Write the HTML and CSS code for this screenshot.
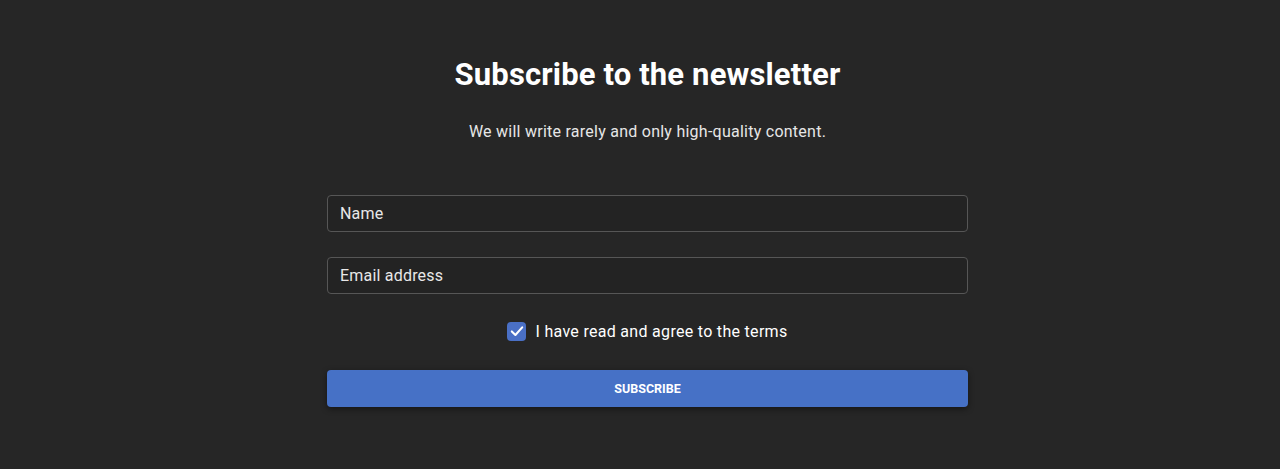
FILE: index.html
```html
<!DOCTYPE html>
<html lang="en">
<head>
<meta charset="utf-8">
<title>Subscribe</title>
<link rel="stylesheet" href="styles.css">
</head>
<body>
<main class="page">
  <section class="subscribe">
    <h1 class="title">Subscribe to the newsletter</h1>
    <p class="lead">We will write rarely and only high-quality content.</p>
    <form class="form">
      <input class="field" type="text" placeholder="Name">
      <input class="field" type="email" placeholder="Email address">
      <label class="agree">
        <span class="check">
          <svg viewBox="0 0 20 20" width="16" height="16"><path d="M3.5 10.5l4.5 4.5 8.5-9.5" fill="none" stroke="#fff" stroke-width="2.6" stroke-linecap="round" stroke-linejoin="round"/></svg>
        </span>
        <span>I have read and agree to the terms</span>
      </label>
      <button class="btn" type="button">Subscribe</button>
    </form>
  </section>
</main>
</body>
</html>
```
FILE: styles.css
```css
html, body {
  margin: 0;
  padding: 0;
  background: #262626;
  height: 100%;
}
body {
  font-family: Roboto, "Liberation Sans", sans-serif;
  color: #fff;
}
.page {
  padding: 55px 0 0 15px;
  display: flex;
  justify-content: center;
}
.subscribe {
  width: 641px;
  display: flex;
  flex-direction: column;
  align-items: center;
}
.title {
  margin: 0;
  font-size: 31px;
  font-weight: 700;
  letter-spacing: 0.15px;
  line-height: 40px;
  color: #fff;
}
.lead {
  margin: 26px 0 0;
  font-size: 16px;
  letter-spacing: 0.25px;
  line-height: 22px;
  color: #e6e6e6;
}
.form {
  width: 100%;
  margin-top: 52px;
  display: flex;
  flex-direction: column;
}
.field {
  box-sizing: border-box;
  width: 100%;
  height: 37px;
  margin: 0 0 25px;
  padding: 0 12px;
  background: #232323;
  border: 1px solid #565656;
  border-radius: 4px;
  font-family: inherit;
  font-size: 16px;
  letter-spacing: 0.2px;
  color: #fff;
  outline: none;
}
.field::placeholder {
  color: #e8e8e8;
  opacity: 1;
}
.field:last-of-type {
  margin-bottom: 0;
}
.agree {
  display: flex;
  align-items: center;
  justify-content: center;
  gap: 9px;
  height: 22px;
  margin-top: 26px;
  font-size: 16px;
  letter-spacing: 0.3px;
  color: #fff;
}
.check {
  width: 19px;
  height: 19px;
  border-radius: 4px;
  background: #4a70c6;
  display: flex;
  align-items: center;
  justify-content: center;
}
.btn {
  margin-top: 28px;
  height: 37px;
  border: none;
  border-radius: 4px;
  background: #4671c6;
  color: #fff;
  font-family: inherit;
  font-size: 12.5px;
  font-weight: 700;
  text-transform: uppercase;
  box-shadow: 0 2px 6px rgba(0, 0, 0, 0.45);
}
```
